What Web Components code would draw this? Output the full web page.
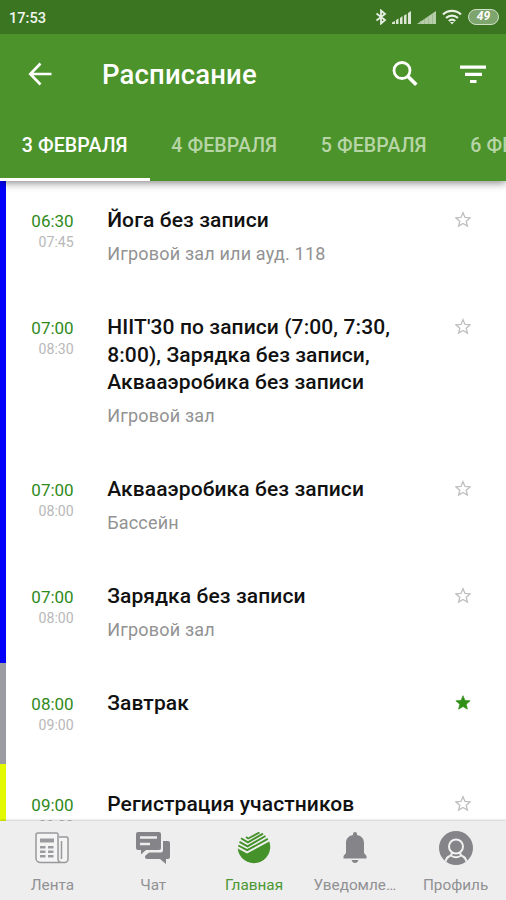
<!DOCTYPE html>
<html lang="ru"><head><meta charset="utf-8"><title>Расписание</title>
<style>html,body{margin:0;height:100%;overflow:hidden;background:#fff}</style></head>
<body><schedule-app></schedule-app>
<script>
const define=(name,html)=>customElements.define(name,class extends HTMLElement{
  connectedCallback(){
    if(this.shadowRoot)return;
    const t=document.createElement('template');
    t.innerHTML=typeof html==='function'?html(this):html;
    this.attachShadow({mode:'open'}).append(t.content.cloneNode(true));
  }
});

define('status-bar',`<style>
:host{display:flex;align-items:center;height:34px;flex:none;background:#3c7522;color:#f1f6ee;padding:0 7px 0 9px;box-sizing:border-box}
time{font:500 14.6px/34px Roboto,sans-serif;flex:1;padding-top:1px}
svg{display:block;flex:none}
.bat{box-sizing:border-box;width:31px;height:16px;border:1.6px solid #cfe0c6;border-radius:8px;background:#7fa56e;color:#fff;font:italic 700 12px/13px Roboto,sans-serif;text-align:center}
</style>
<time>17:53</time>
<svg width="12" height="16" viewBox="0 0 12 16" fill="none" stroke="#e6efe1" stroke-width="1.8"><path d="M1.5 4.5 10 11 6 14.500V1.500L10 5 1.500 11.500"/></svg>
<svg width="20" height="14" viewBox="0 0 20 14" style="margin-left:5px" fill="#dbe7d4"><path d="M0 14v-1.500l3-1.500v3zM4 14v-4l2.500-1.500V14zM8 14V8l2.500-2v8zM12 14V5.500L14.500 4v10zM16 14V3l3-2v13z"/></svg>
<svg width="20" height="14" viewBox="0 0 20 14" style="margin-left:5px" fill="#b6cda9"><path d="M0 14 19 1v13z"/><path d="M3.500 11v3M7.500 9v5M11.500 6v8M15.500 4v10" stroke="#a0bd91"/></svg>
<svg width="20" height="16" viewBox="0 0 20 16" style="margin:0 6px 0 5px" fill="none" stroke="#e9f1e5" stroke-width="2.200"><path d="M1 5.500a13 13 0 0 1 18 0M4 9a9 9 0 0 1 12 0M6.800 12a5 5 0 0 1 6.400 0"/><path d="m8 13 2 2.500 2-2.500z" fill="#e9f1e5" stroke="none"/></svg>
<div class="bat">49</div>`);

define('app-bar',`<style>
:host{display:flex;align-items:center;height:80px;flex:none;padding:0 19px 0 28px;box-sizing:border-box;color:#fff}
h1{margin:0 0 0 50px;flex:1;font:500 27.5px/40px Roboto,sans-serif;letter-spacing:.15px;padding-top:1px}
svg{display:block;flex:none}
</style>
<svg width="24" height="24" viewBox="0 0 24 24" fill="none" stroke="#fff" stroke-width="2.700"><path d="M23.500 12H2.500M12.500 1.500 2.300 12l10.200 10.500"/></svg>
<h1><slot></slot></h1>
<svg width="28" height="28" viewBox="0 0 28 28" style="margin-right:41px" fill="none" stroke="#fff"><circle cx="11" cy="10.500" r="8" stroke-width="2.800"/><path d="m16.500 16 8.800 8.800" stroke-width="3.600"/></svg>
<svg width="27" height="20" viewBox="0 0 27 20" fill="#fff"><path d="M0 1.500h26v3.300H0zM5 8.700h17V12H5zM10 16h6.500v3H10z"/></svg>`);

define('date-tab',`<style>
:host{display:block;flex:none;box-sizing:border-box;width:149.5px;height:67px;padding-top:20px;text-align:center;font:500 19.6px/24px Roboto,sans-serif;letter-spacing:.08px;color:#b7d5a6;border-bottom:3px solid transparent;white-space:nowrap}
:host([active]){color:#fff;border-color:#fff}
</style><slot></slot>`);

define('date-tabs',`<style>:host{display:flex;height:67px;flex:none;overflow:hidden}</style><slot></slot>`);

const star='M12 1.800l3 7.100 7.700.6-5.900 5 1.800 7.500L12 18l-6.600 4 1.800-7.500-5.900-5 7.700-.6z';
define('schedule-row',e=>`<style>
:host{display:grid;grid-template-columns:6px 67.7px 1fr 51.5px;box-sizing:border-box;min-height:101px;flex:none;background:#fff}
.bar{background:var(--mark)}
.time{padding-top:27.5px;text-align:right;font:400 17px/26px Roboto,sans-serif;color:#2f8a1b}
.time small{display:block;font-size:14.1px;line-height:16px;color:#b8b8b8}
.body{padding:27px 0 22.5px 33.5px}
.title{font:500 21px/27.5px Roboto,sans-serif;letter-spacing:.1px;color:#111;white-space:pre-line}
.sub{margin-top:8px;font:400 18px/22px Roboto,sans-serif;letter-spacing:.19px;color:#929292}
svg{display:block;margin-top:31px}
</style>
<div class="bar"></div>
<div class="time">${e.getAttribute('from')}<small>${e.getAttribute('to')}</small></div>
<div class="body"><div class="title"><slot></slot></div>${e.hasAttribute('place')?`<div class="sub">${e.getAttribute('place')}</div>`:''}</div>
<svg width="16" height="17" viewBox="0 0 24 24"><path d="${star}" ${e.hasAttribute('starred')?'fill="#2f8f16" stroke="#2f8f16"':'fill="none" stroke="#c0c0c0" stroke-width="2"'}/></svg>`);

const icons={
news:`<svg width="34" height="32" viewBox="0 0 34 32"><g fill="#f4f4f4" stroke="#99999c" stroke-width="1.500"><path d="M24 5h7.500a1.500 1.500 0 0 1 1.500 1.500V27a3.500 3.500 0 0 1-3.500 3.500H5.500A4.500 4.500 0 0 1 1 26V3a2 2 0 0 1 2-2h18.500A1.500 1.500 0 0 1 23 2.500V27a3.500 3.500 0 0 0 3.500 3.500"/><path d="M26.500 9v18"/></g><path d="M5 6.500h14v4H5zM5 14h5.500v2.500H5zm8 0h5.500v2.500H13zM5 18.500h5.500V21H5zm8 0h5.500V21H13zM5 23h5.500v2.500H5zm8 0h5.500v2.500H13z" fill="#9b9b9f"/></svg>`,
chat:`<svg width="34" height="32" viewBox="0 0 34 32" fill="#858589"><path d="M2 0h21q2 0 2 2v14q0 2-2 2H10l-5 4.500V18H2q-2 0-2-2V2q0-2 2-2z"/><path d="M27 9h5q2 0 2 2v14q0 2-2 2h-2v5l-6-5H11q-2 0-2-2v-1l4-3.500h12q2 0 2-2z"/><path d="M4 5.500h17M4 12h10" stroke="#eee" stroke-width="2.400"/></svg>`,
home:`<svg width="34" height="33" viewBox="0 0 34 33"><path d="M.7 16.500 10 21.500 32.300 9.500A16.300 16.300 0 1 1 .7 16.500z" fill="#45922a"/><path d="m1.300 13.500 8.900 4.700L30.800 6.900M2.500 9.800l8 4.500L28.500 4M4 6.300l6.900 4L26 1.700M9 5l2.200 1.500L22.500.5" fill="none" stroke="#45922a" stroke-width="1.900"/></svg>`,
bell:`<svg width="24" height="32" viewBox="0 0 24 32" fill="#858589"><path d="M10 3V2q0-2 2-2t2 2v1c5 1 7 4 7 8v10l2.500 3V26.500H.5V24L3 21V11c0-4 2-7 7-8zM8.500 28h7Q14.500 31 12 31t-3.500-3z"/></svg>`,
user:`<svg width="34" height="34" viewBox="0 0 34 34"><circle cx="17" cy="17" r="17" fill="#858589"/><g fill="none" stroke="#f0f0f0" stroke-width="2"><circle cx="17" cy="15.500" r="7"/><path d="M13 21.500q-.3 3-3 4-2.500 1-3.500 5M21 21.500q.3 3 3 4 2.500 1 3.500 5M12 24.500q5 3.500 10 0"/></g></svg>`
};

define('nav-item',e=>`<style>
:host{display:flex;flex-direction:column;align-items:center;flex:1 1 0;min-width:0;color:#919194;font:400 15.3px/20px Roboto,sans-serif}
:host([active]){color:#4b9732}
.icon{height:34px;margin-top:10px;display:flex;align-items:center}
svg{display:block}
.label{margin-top:10px;white-space:nowrap}
</style><div class="icon">${icons[e.getAttribute('icon')]}</div><div class="label"><slot></slot></div>`);

define('bottom-nav',`<style>
:host{display:flex;flex:none;height:79px;padding-left:2px;box-sizing:border-box;background:#eee;box-shadow:0 -1px 2px #0003;position:relative}
</style><slot></slot>`);

define('schedule-app',`<style>
:host{display:flex;flex-direction:column;width:506px;height:900px;overflow:hidden;background:#fff}
header{flex:none;background:#4b932a;box-shadow:0 2px 8px #0007;position:relative}
main{flex:1;min-height:0;overflow:hidden;display:flex;flex-direction:column;margin-top:-1px}
header{z-index:1}
schedule-row{--mark:#0000fa}
.grey{--mark:#9b9ba3}
.yellow{--mark:#e3f900}
</style>
<header><status-bar></status-bar><app-bar>Расписание</app-bar>
<date-tabs><date-tab active>3 ФЕВРАЛЯ</date-tab><date-tab>4 ФЕВРАЛЯ</date-tab><date-tab>5 ФЕВРАЛЯ</date-tab><date-tab>6 ФЕВРАЛЯ</date-tab></date-tabs></header>
<main>
<schedule-row from="06:30" to="07:45" place="Игровой зал или ауд. 118">Йога без записи</schedule-row>
<schedule-row from="07:00" to="08:30" place="Игровой зал">HIIT'30 по записи (7:00, 7:30,
8:00), Зарядка без записи,
Аквааэробика без записи</schedule-row>
<schedule-row from="07:00" to="08:00" place="Бассейн">Аквааэробика без записи</schedule-row>
<schedule-row from="07:00" to="08:00" place="Игровой зал">Зарядка без записи</schedule-row>
<schedule-row class="grey" from="08:00" to="09:00" starred>Завтрак</schedule-row>
<schedule-row class="yellow" from="09:00" to="09:30">Регистрация участников</schedule-row>
</main>
<bottom-nav><nav-item icon="news">Лента</nav-item><nav-item icon="chat">Чат</nav-item><nav-item icon="home" active>Главная</nav-item><nav-item icon="bell">Уведомле…</nav-item><nav-item icon="user">Профиль</nav-item></bottom-nav>`);
</script></body></html>
